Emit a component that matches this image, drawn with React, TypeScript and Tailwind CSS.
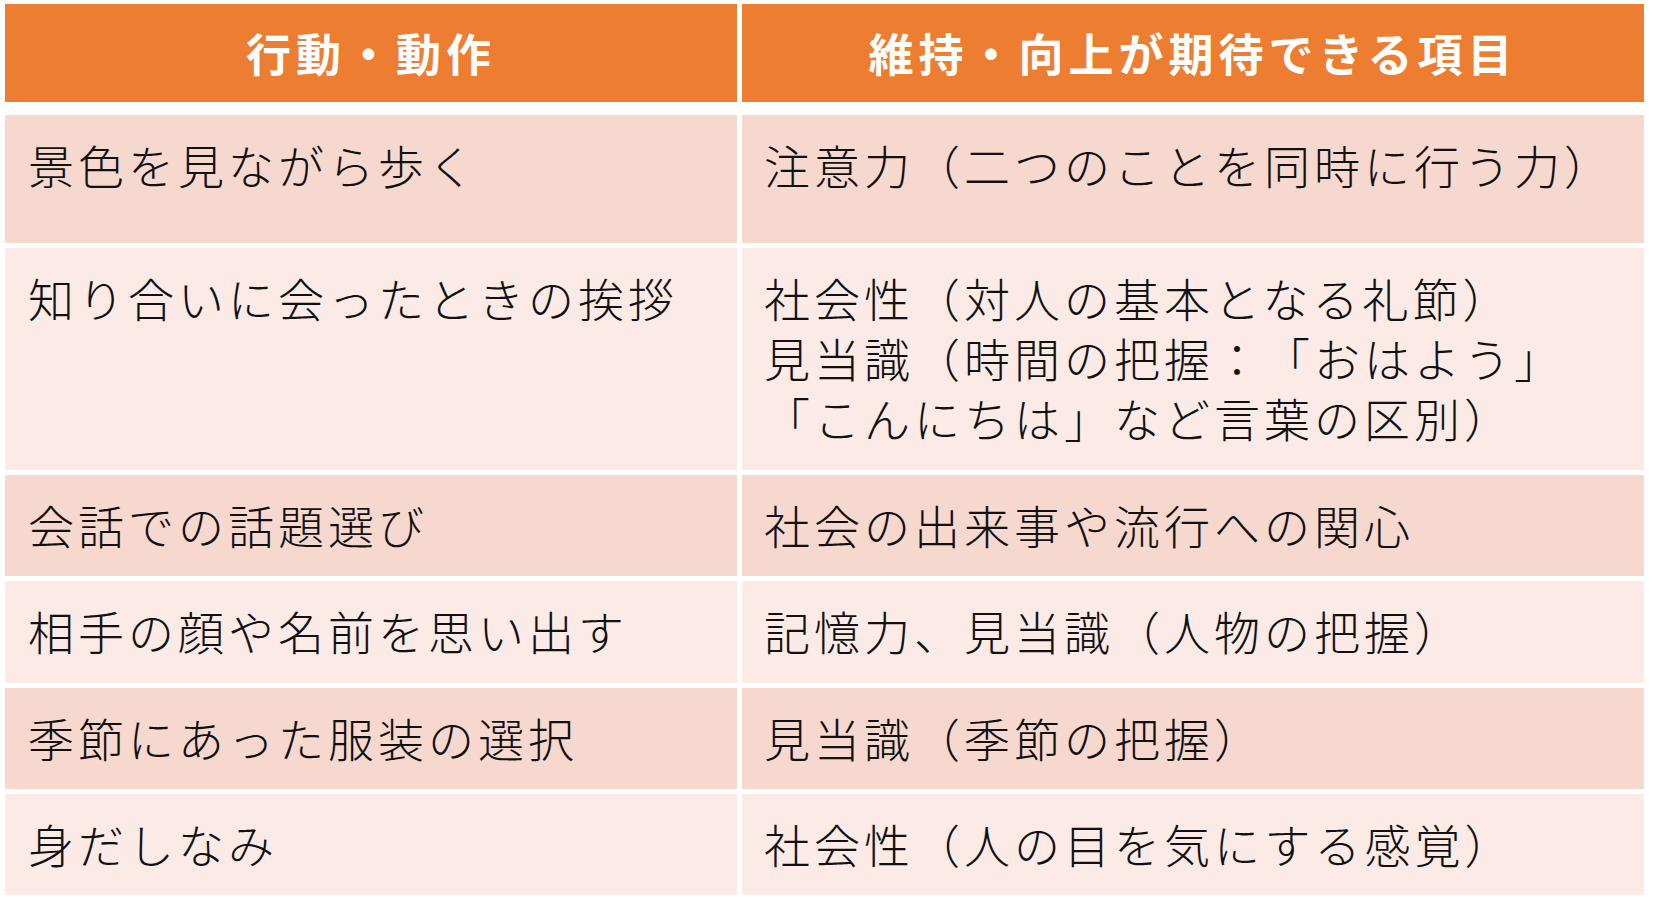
const rows: { action: string; items: string[]; h: string; tone: "dark" | "light" }[] = [
  { action: "景色を見ながら歩く", items: ["注意力（二つのことを同時に行う力）"], h: "h-[128px]", tone: "dark" },
  {
    action: "知り合いに会ったときの挨拶",
    items: ["社会性（対人の基本となる礼節）", "見当識（時間の把握：「おはよう」", "「こんにちは」など言葉の区別）"],
    h: "h-[222px]",
    tone: "light",
  },
  { action: "会話での話題選び", items: ["社会の出来事や流行への関心"], h: "h-[101px]", tone: "dark" },
  { action: "相手の顔や名前を思い出す", items: ["記憶力、見当識（人物の把握）"], h: "h-[102px]", tone: "light" },
  { action: "季節にあった服装の選択", items: ["見当識（季節の把握）"], h: "h-[101px]", tone: "dark" },
  { action: "身だしなみ", items: ["社会性（人の目を気にする感覚）"], h: "h-[101px]", tone: "light" },
];

const font = { fontFamily: '"Noto Sans CJK JP", "Noto Sans", sans-serif' };

export default function App() {
  return (
    <div className="w-[1656px] h-[905px] bg-white pt-[4px] pl-[5px] [text-spacing-trim:space-all]" style={font}>
      <div className="w-[1639px] flex flex-col">
        <div className="flex gap-[5px] h-[98px]">
          <div className="w-[732px] bg-[#ED7D31] flex items-center justify-center text-white font-bold text-[45px] tracking-[5px]">
            行動・動作
          </div>
          <div className="flex-1 bg-[#ED7D31] flex items-center justify-center text-white font-bold text-[45px] tracking-[5px]">
            維持・向上が期待できる項目
          </div>
        </div>
        <div className="flex flex-col gap-[5px] mt-[13px]">
          {rows.map((r) => {
            const bg = r.tone === "dark" ? "bg-[#F7D8CF]" : "bg-[#FBEAE6]";
            return (
              <div key={r.action} className={`flex gap-[5px] ${r.h}`}>
                <div className={`w-[732px] ${bg} pl-[23px] pt-[19px] text-[#111] font-light text-[46px] leading-[60px] tracking-[4px]`}>
                  {r.action}
                </div>
                <div className={`flex-1 ${bg} pl-[22px] pt-[19px] text-[#111] font-light text-[46px] leading-[60px] tracking-[4px]`}>
                  {r.items.map((t) => (
                    <div key={t} className="whitespace-nowrap">
                      {t}
                    </div>
                  ))}
                </div>
              </div>
            );
          })}
        </div>
      </div>
    </div>
  );
}
